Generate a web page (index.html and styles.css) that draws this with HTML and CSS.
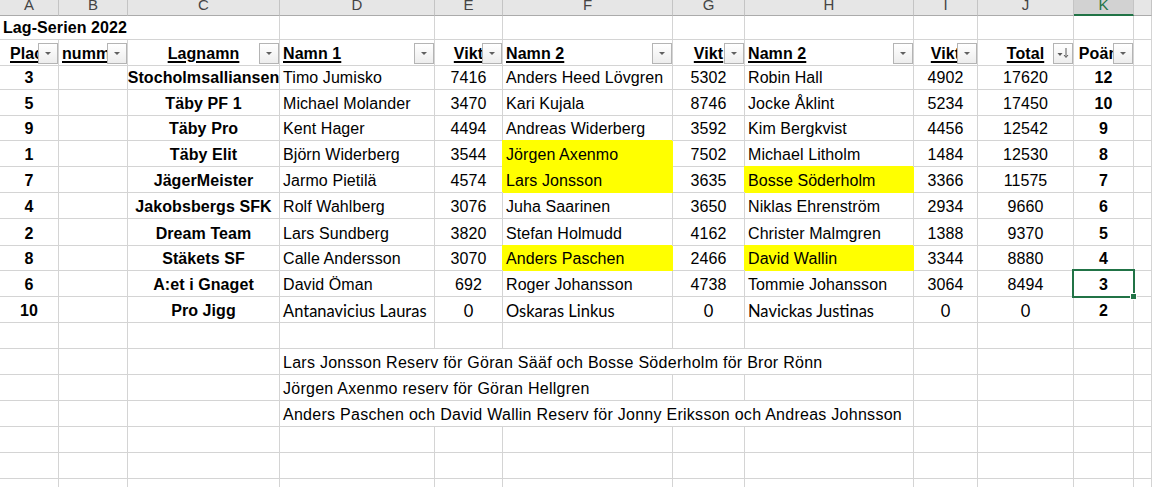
FILE: index.html
```html
<!DOCTYPE html>
<html lang="sv">
<head>
<meta charset="utf-8">
<title>Lag-Serien 2022</title>
<link rel="stylesheet" href="styles.css">
</head>
<body>
<div class="sheet">
  <!-- column headers -->
  <div class="h">A</div><div class="h">B</div><div class="h">C</div><div class="h">D</div><div class="h">E</div><div class="h">F</div><div class="h">G</div><div class="h">H</div><div class="h">I</div><div class="h">J</div><div class="h hsel">K</div><div class="h"></div>

  <!-- row 1 -->
  <div class="c b span3">Lag-Serien 2022</div><div class="c"></div><div class="c"></div><div class="c"></div><div class="c"></div><div class="c"></div><div class="c"></div><div class="c"></div><div class="c"></div><div class="c"></div>

  <!-- row 2: table header -->
  <div class="c th ind"><span class="u">Placering</span><span class="fb"></span></div>
  <div class="c th"><span class="u">nummer</span><span class="fb"></span></div>
  <div class="c th m"><span class="u">Lagnamn</span><span class="fb"></span></div>
  <div class="c th"><span class="u">Namn 1</span><span class="fb"></span></div>
  <div class="c th m"><span class="u">Vikt</span><span class="fb"></span></div>
  <div class="c th"><span class="u">Namn 2</span><span class="fb"></span></div>
  <div class="c th m"><span class="u">Vikt</span><span class="fb"></span></div>
  <div class="c th"><span class="u">Namn 2</span><span class="fb"></span></div>
  <div class="c th m"><span class="u">Vikt</span><span class="fb"></span></div>
  <div class="c th m"><span class="u">Total</span><span class="fb sort"><svg width="18" height="18" viewBox="0 0 18 18"><path d="M3.5 9h5l-2.5 3z" fill="#595959"/><path d="M12 4v9M10 11l2 2.5 2-2.5" stroke="#595959" stroke-width="1" fill="none"/></svg></span></div>
  <div class="c th m"><span>Poäng</span><span class="fb"></span></div>
  <div class="c"></div>

  <!-- data rows -->
  <div class="c b m">3</div><div class="c"></div><div class="c b m">Stocholmsalliansen</div><div class="c">Timo Jumisko</div><div class="c m">7416</div><div class="c">Anders Heed Lövgren</div><div class="c m">5302</div><div class="c">Robin Hall</div><div class="c m">4902</div><div class="c m">17620</div><div class="c b m">12</div><div class="c"></div>

  <div class="c b m">5</div><div class="c"></div><div class="c b m">Täby PF 1</div><div class="c">Michael Molander</div><div class="c m">3470</div><div class="c">Kari Kujala</div><div class="c m">8746</div><div class="c">Jocke Åklint</div><div class="c m">5234</div><div class="c m">17450</div><div class="c b m">10</div><div class="c"></div>

  <div class="c b m">9</div><div class="c"></div><div class="c b m">Täby Pro</div><div class="c">Kent Hager</div><div class="c m">4494</div><div class="c">Andreas Widerberg</div><div class="c m">3592</div><div class="c">Kim Bergkvist</div><div class="c m">4456</div><div class="c m">12542</div><div class="c b m">9</div><div class="c"></div>

  <div class="c b m">1</div><div class="c"></div><div class="c b m">Täby Elit</div><div class="c">Björn Widerberg</div><div class="c m">3544</div><div class="c y">Jörgen Axenmo</div><div class="c m">7502</div><div class="c">Michael Litholm</div><div class="c m">1484</div><div class="c m">12530</div><div class="c b m">8</div><div class="c"></div>

  <div class="c b m">7</div><div class="c"></div><div class="c b m">JägerMeister</div><div class="c">Jarmo Pietilä</div><div class="c m">4574</div><div class="c y">Lars Jonsson</div><div class="c m">3635</div><div class="c y">Bosse Söderholm</div><div class="c m">3366</div><div class="c m">11575</div><div class="c b m">7</div><div class="c"></div>

  <div class="c b m">4</div><div class="c"></div><div class="c b m">Jakobsbergs SFK</div><div class="c">Rolf Wahlberg</div><div class="c m">3076</div><div class="c">Juha Saarinen</div><div class="c m">3650</div><div class="c">Niklas Ehrenström</div><div class="c m">2934</div><div class="c m">9660</div><div class="c b m">6</div><div class="c"></div>

  <div class="c b m">2</div><div class="c"></div><div class="c b m">Dream Team</div><div class="c">Lars Sundberg</div><div class="c m">3820</div><div class="c">Stefan Holmudd</div><div class="c m">4162</div><div class="c">Christer Malmgren</div><div class="c m">1388</div><div class="c m">9370</div><div class="c b m">5</div><div class="c"></div>

  <div class="c b m">8</div><div class="c"></div><div class="c b m">Stäkets SF</div><div class="c">Calle Andersson</div><div class="c m">3070</div><div class="c y">Anders Paschen</div><div class="c m">2466</div><div class="c y">David Wallin</div><div class="c m">3344</div><div class="c m">8880</div><div class="c b m">4</div><div class="c"></div>

  <div class="c b m">6</div><div class="c"></div><div class="c b m">A:et i Gnaget</div><div class="c">David Öman</div><div class="c m">692</div><div class="c">Roger Johansson</div><div class="c m">4738</div><div class="c">Tommie Johansson</div><div class="c m">3064</div><div class="c m">8494</div><div class="c b m sel">3<span class="selbox"><span class="handle"></span></span></div><div class="c"></div>

  <div class="c b m">10</div><div class="c"></div><div class="c b m">Pro Jigg</div><div class="c cal">Antanavicius Lauras</div><div class="c m cal">0</div><div class="c cal">Oskaras Linkus</div><div class="c m cal">0</div><div class="c cal">Navickas Justinas</div><div class="c m cal">0</div><div class="c m cal">0</div><div class="c b m">2</div><div class="c"></div>

  <!-- empty row -->
  <div class="c"></div><div class="c"></div><div class="c"></div><div class="c"></div><div class="c"></div><div class="c"></div><div class="c"></div><div class="c"></div><div class="c"></div><div class="c"></div><div class="c"></div><div class="c"></div>

  <!-- notes -->
  <div class="c"></div><div class="c"></div><div class="c"></div><div class="c note span5">Lars Jonsson Reserv för Göran Sääf och Bosse Söderholm för Bror Rönn</div><div class="c"></div><div class="c"></div><div class="c"></div><div class="c"></div>

  <div class="c"></div><div class="c"></div><div class="c"></div><div class="c note span3">Jörgen Axenmo reserv för Göran Hellgren</div><div class="c"></div><div class="c"></div><div class="c"></div><div class="c"></div><div class="c"></div><div class="c"></div>

  <div class="c"></div><div class="c"></div><div class="c"></div><div class="c note span5">Anders Paschen och David Wallin Reserv för Jonny Eriksson och Andreas Johnsson</div><div class="c"></div><div class="c"></div><div class="c"></div><div class="c"></div>

  <!-- empty rows -->
  <div class="c"></div><div class="c"></div><div class="c"></div><div class="c"></div><div class="c"></div><div class="c"></div><div class="c"></div><div class="c"></div><div class="c"></div><div class="c"></div><div class="c"></div><div class="c"></div>
  <div class="c"></div><div class="c"></div><div class="c"></div><div class="c"></div><div class="c"></div><div class="c"></div><div class="c"></div><div class="c"></div><div class="c"></div><div class="c"></div><div class="c"></div><div class="c"></div>
  <div class="c"></div><div class="c"></div><div class="c"></div><div class="c"></div><div class="c"></div><div class="c"></div><div class="c"></div><div class="c"></div><div class="c"></div><div class="c"></div><div class="c"></div><div class="c"></div>
</div>
</body>
</html>
```

FILE: styles.css
```css
html, body {
  margin: 0;
  padding: 0;
  background: #ffffff;
  overflow: hidden;
}

.sheet {
  display: grid;
  grid-template-columns: 59px 69px 152px 155px 68px 170px 72px 169px 64px 96px 60px 1fr;
  grid-template-rows: 16px 24px 26px 24px 26px 25px 26px 26px 26px 27px 25px 26px 26px 26px 26px 26px 26px 26px 26px 26px;
  width: 1152px;
  height: 487px;
  overflow: hidden;
  font-family: "Liberation Sans", Arial, sans-serif;
  font-size: 16px;
  color: #000000;
}

/* column header strip */
.h {
  box-sizing: border-box;
  display: flex;
  align-items: flex-end;
  justify-content: center;
  padding-bottom: 2px;
  line-height: 16px;
  font-size: 15px;
  color: #444444;
  background: #e6e6e6;
  border-right: 1px solid #c4c4c4;
  border-bottom: 1px solid #ababab;
  overflow: hidden;
}

.hsel {
  background: #d2d2d2;
  color: #217346;
  border-bottom: 2px solid #217346;
  padding-bottom: 1px;
}

/* cells */
.c {
  box-sizing: border-box;
  position: relative;
  display: flex;
  align-items: flex-end;
  padding: 0 3px 2px;
  line-height: 18px;
  white-space: nowrap;
  overflow: hidden;
  letter-spacing: 0.08px;
  border-right: 1px solid #d4d4d4;
  border-bottom: 1px solid #d4d4d4;
}

.b { font-weight: 700; }
.m { justify-content: center; }

.span3 { grid-column: span 3; }
.span5 { grid-column: span 5; }

.note { letter-spacing: 0.27px; }

.y {
  background: #ffff00;
  border-right-color: #ffff00;
  border-bottom-color: #ffff00;
  box-shadow: -1px -1px 0 0 #ffff00;
  overflow: visible;
}

.cal {
  font-family: Lato, "Open Sans", sans-serif;
  font-size: 16.5px;
  letter-spacing: 0;
}

/* table header row */
.th { font-weight: 700; }
.ind { padding-left: 10px; }
.u {
  text-decoration: underline;
  text-decoration-thickness: 2px;
  text-underline-offset: 2px;
}

.fb {
  position: absolute;
  right: 0;
  top: 3px;
  box-sizing: border-box;
  width: 20px;
  height: 21px;
  border: 1px solid #b4b4b4;
  background: linear-gradient(#ffffff, #ededed);
}

.fb::after {
  content: "";
  position: absolute;
  left: 6px;
  top: 8px;
  border-left: 3px solid transparent;
  border-right: 3px solid transparent;
  border-top: 3px solid #606060;
}

.fb.sort::after { display: none; }
.fb.sort svg { display: block; margin: 0; }

/* selected cell */
.sel { overflow: visible; }
.selbox {
  position: absolute;
  left: -2px;
  top: -2px;
  right: -2px;
  bottom: -2px;
  border: 2px solid #217346;
  z-index: 2;
}
.handle {
  position: absolute;
  right: -4px;
  bottom: -4px;
  width: 5px;
  height: 5px;
  background: #217346;
  border: 1px solid #ffffff;
}
```
